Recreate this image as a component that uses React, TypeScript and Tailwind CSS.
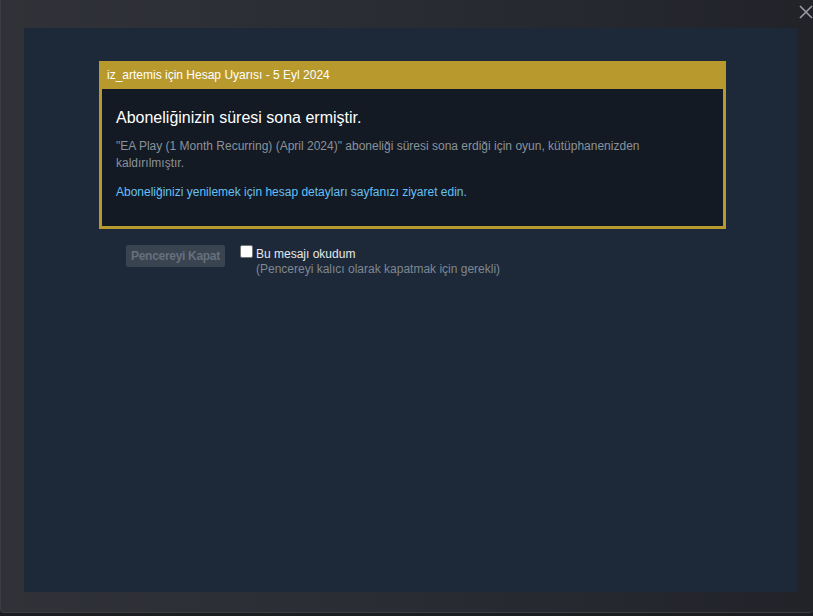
import { useState } from "react";

const App = () => {
  const [read, setRead] = useState(false);

  return (
    <div className="w-[813px] h-[616px] bg-[#1b1c20] font-['Liberation_Sans',Arial,sans-serif]">
      <div className="relative h-[613px] rounded-b-[4px] border-b border-l border-[#3a3d44] bg-gradient-to-r from-[#303238] via-[#2a2c33] to-[#212329] pt-[28px] pl-[23px] pr-[16px] pb-[20px]">
        {/* Close button */}
        <button className="absolute right-0 top-[5px] w-[14px] h-[14px] text-[#9a9ca2]">
          <svg viewBox="0 0 14 14" className="w-full h-full" stroke="currentColor" strokeWidth="1.6">
            <path d="M1 1l12 12M13 1L1 13" />
          </svg>
        </button>

        <div className="h-full bg-[#1d2939] pt-[33px] pl-[75px]">
          {/* Alert box */}
          <div className="w-[627px] bg-[#b8992e] p-[3px] pt-0">
            <div className="h-[28px] flex items-center px-[5px] text-[12px] text-white">
              iz_artemis için Hesap Uyarısı - 5 Eyl 2024
            </div>
            <div className="bg-[#131a24] px-[14px] pt-[18px] pb-[25px]">
              <h1 className="text-[16px] text-white leading-[22px]">
                Aboneliğinizin süresi sona ermiştir.
              </h1>
              <p className="mt-[9px] text-[12px] leading-[17px] text-[#8b929a] pr-[60px]">
                "EA Play (1 Month Recurring) (April 2024)" aboneliği süresi sona erdiği için oyun, kütüphanenizden kaldırılmıştır.
              </p>
              <p className="mt-[12px] text-[12px] leading-[17px] text-[#66c0f4]">
                Aboneliğinizi yenilemek için hesap detayları sayfanızı ziyaret edin.
              </p>
            </div>
          </div>

          {/* Footer controls */}
          <div className="flex items-start mt-[16px] ml-[27px]">
            <button
              disabled={!read}
              className="h-[22px] w-[99px] rounded-[2px] bg-[#3a4350] text-[12px] font-bold tracking-[-0.3px] text-[#66707c]"
            >
              Pencereyi Kapat
            </button>
            <label className="flex items-start ml-[15px] cursor-pointer">
              <input
                type="checkbox"
                checked={read}
                onChange={(e) => setRead(e.target.checked)}
                className="w-[13px] h-[13px] appearance-none bg-white rounded-[2px] border border-[#767676]"
              />
              <span className="ml-[3px] mt-[2px] text-[12px] leading-[15px]">
                <span className="block text-[#e6e9ec]">Bu mesajı okudum</span>
                <span className="block text-[#7f8790]">(Pencereyi kalıcı olarak kapatmak için gerekli)</span>
              </span>
            </label>
          </div>
        </div>
      </div>
    </div>
  );
};

export default App;
